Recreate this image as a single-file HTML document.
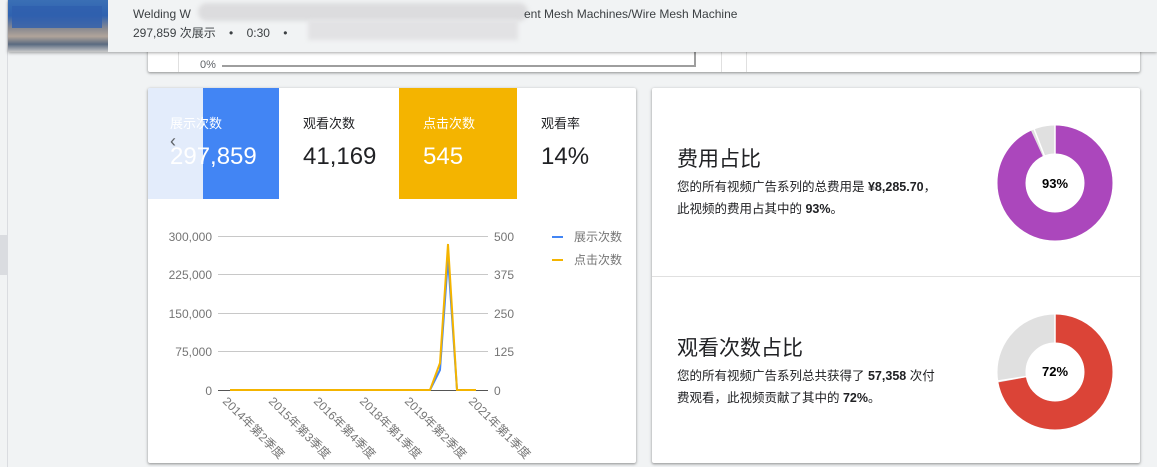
<!DOCTYPE html>
<html><head><meta charset="utf-8"><style>
*{margin:0;padding:0;box-sizing:border-box}
body{width:1157px;height:467px;overflow:hidden;background:#f1f3f4;font-family:"Liberation Sans","Noto Sans CJK SC",sans-serif;position:relative;color:#202124}
.abs{position:absolute}
.card{position:absolute;background:#fff;box-shadow:0 1px 2px rgba(0,0,0,.3),0 1px 3px 1px rgba(0,0,0,.1);border-radius:2px}
</style></head><body>
<div class="abs" style="left:7px;top:0;width:1px;height:467px;background:#dadce0"></div>
<div class="abs" style="left:0;top:235px;width:7px;height:40px;background:#dadce0"></div>

<div class="card" style="left:148px;top:40px;width:992px;height:32px;overflow:hidden">
  <div class="abs" style="left:30px;top:0;width:1px;height:32px;background:#e0e0e0"></div>
  <div class="abs" style="left:52px;top:19px;font-size:11px;color:#5f6368">0%</div>
  <div class="abs" style="left:74px;top:25px;width:473px;height:2px;background:#9e9e9e"></div>
  <div class="abs" style="left:546px;top:0;width:2px;height:27px;background:#9e9e9e"></div>
  <div class="abs" style="left:573px;top:0;width:1px;height:32px;background:#e0e0e0"></div>
  <div class="abs" style="left:598px;top:0;width:1px;height:32px;background:#e0e0e0"></div>
</div>

<div class="abs" style="left:8px;top:0;width:1149px;height:52px;background:#f1f3f4;box-shadow:0 1px 3px rgba(0,0,0,.35)">
  <div class="abs" style="left:0;top:0;width:100px;height:52px;background:linear-gradient(180deg,#3a6fb5 0%,#2f62b0 30%,#8a8a90 55%,#b0a49a 70%,#5a6a80 85%,#c9c9c9 100%)"></div>
  <div class="abs" style="left:4px;top:6px;width:90px;height:22px;background:#2f5fae;opacity:.8"></div>
  <div class="abs" style="left:125px;top:7px;font-size:12px;color:#3c4043">Welding W</div>
  <div class="abs" style="left:190px;top:3px;width:330px;height:18px;background:#dcdcde;border-radius:9px;filter:blur(2px)"></div>
  <div class="abs" style="left:300px;top:20px;width:210px;height:20px;background:#e2e2e4;filter:blur(2px)"></div>
  <div class="abs" style="left:516px;top:7px;font-size:12px;color:#3c4043">ent Mesh Machines/Wire Mesh Machine</div>
  <div class="abs" style="left:125px;top:24px;font-size:12px;color:#3c4043">297,859 次展示&nbsp;&nbsp;&nbsp;&nbsp;•&nbsp;&nbsp;&nbsp;&nbsp;0:30&nbsp;&nbsp;&nbsp;&nbsp;•</div>
</div>

<div class="card" style="left:148px;top:88px;width:488px;height:375px;overflow:hidden">
  <div class="abs" style="left:0;top:0;width:55px;height:111px;background:#e3ecfb"></div>
  <div class="abs" style="left:55px;top:0;width:76px;height:111px;background:#4285f4"></div>
  <div class="abs" style="left:251px;top:0;width:118px;height:111px;background:#f4b400"></div>
  <div class="abs" style="left:22px;top:25px;font-size:13px;color:#fff">展示次数</div>
  <div class="abs" style="left:22px;top:55px;font-size:24px;color:#fff">297,859</div>
  <div class="abs" style="left:22px;top:43px;font-size:18px;color:#5f6368">‹</div>
  <div class="abs" style="left:155px;top:25px;font-size:13px">观看次数</div>
  <div class="abs" style="left:155px;top:55px;font-size:24px">41,169</div>
  <div class="abs" style="left:275px;top:25px;font-size:13px;color:#fff">点击次数</div>
  <div class="abs" style="left:275px;top:55px;font-size:24px;color:#fff">545</div>
  <div class="abs" style="left:393px;top:25px;font-size:13px">观看率</div>
  <div class="abs" style="left:393px;top:55px;font-size:24px">14%</div>
</div>
<svg class="abs" style="left:0;top:0" width="1157" height="467">
  <g stroke="#c8c8c8" stroke-width="1">
    <line x1="218" y1="236.5" x2="488" y2="236.5"/><line x1="218" y1="274.5" x2="488" y2="274.5"/>
    <line x1="218" y1="313.5" x2="488" y2="313.5"/><line x1="218" y1="351.5" x2="488" y2="351.5"/>
  </g>
  <line x1="218" y1="390.5" x2="488" y2="390.5" stroke="#555"/>
  <g font-size="12" fill="#757575" font-family="Liberation Sans,sans-serif" text-anchor="end">
    <text x="212" y="241">300,000</text><text x="212" y="279">225,000</text><text x="212" y="318">150,000</text><text x="212" y="356">75,000</text><text x="212" y="395">0</text>
  </g>
  <g font-size="12" fill="#757575" font-family="Liberation Sans,sans-serif">
    <text x="494" y="241">500</text><text x="494" y="279">375</text><text x="494" y="318">250</text><text x="494" y="356">125</text><text x="494" y="395">0</text>
  </g>
  <polyline points="230,390 430,390 440,370 448,258 457,390 476,390" fill="none" stroke="#4285f4" stroke-width="2"/>
  <polyline points="230,390 430,390 440,363 448,244 457,390 476,390" fill="none" stroke="#f4b400" stroke-width="2"/>
  <line x1="552" y1="237" x2="563" y2="237" stroke="#4285f4" stroke-width="2"/>
  <line x1="552" y1="260" x2="563" y2="260" stroke="#f4b400" stroke-width="2"/>
  <g font-size="12" fill="#757575" font-family="Liberation Sans,Noto Sans CJK SC,sans-serif">
    <text x="574" y="241">展示次数</text><text x="574" y="264">点击次数</text>
    <text transform="translate(222,402) rotate(45)">2014年第2季度</text>
    <text transform="translate(268,402) rotate(45)">2015年第3季度</text>
    <text transform="translate(313,402) rotate(45)">2016年第4季度</text>
    <text transform="translate(359,402) rotate(45)">2018年第1季度</text>
    <text transform="translate(404,402) rotate(45)">2019年第2季度</text>
    <text transform="translate(468,402) rotate(45)">2021年第1季度</text>
  </g>
</svg>

<div class="card" style="left:652px;top:88px;width:488px;height:375px">
  <div class="abs" style="left:0;top:188px;width:488px;height:1px;background:#e0e0e0"></div>
  <div class="abs" style="left:25px;top:55px;font-size:21px">费用占比</div>
  <div class="abs" style="left:25px;top:88px;font-size:12.5px;line-height:22px">您的所有视频广告系列的总费用是 <b>¥8,285.70</b>，<br>此视频的费用占其中的 <b>93%</b>。</div>
  <div class="abs" style="left:25px;top:244px;font-size:21px">观看次数占比</div>
  <div class="abs" style="left:25px;top:277px;font-size:12.5px;line-height:22px">您的所有视频广告系列总共获得了 <b>57,358</b> 次付<br>费观看，此视频贡献了其中的 <b>72%</b>。</div>
</div>
<svg class="abs" style="left:0;top:0" width="1157" height="467">
  <circle cx="1055" cy="183" r="43.5" fill="none" stroke="#e0e0e0" stroke-width="28"/>
  <circle cx="1055" cy="183" r="43.5" fill="none" stroke="#ab47bc" stroke-width="28" stroke-dasharray="254.2 300" transform="rotate(-90 1055 183)"/>
  <line x1="1055" y1="183" x2="1055" y2="125" stroke="#fff" stroke-width="1.5"/>
  <line x1="1055" y1="183" x2="1034" y2="129" stroke="#fff" stroke-width="1.5"/>
  <text x="1055" y="188" font-size="13" font-weight="bold" text-anchor="middle" font-family="Liberation Sans,sans-serif">93%</text>
  <circle cx="1055" cy="372" r="43.5" fill="none" stroke="#e0e0e0" stroke-width="28"/>
  <circle cx="1055" cy="372" r="43.5" fill="none" stroke="#db4437" stroke-width="28" stroke-dasharray="196.8 300" transform="rotate(-90 1055 372)"/>
  <line x1="1055" y1="372" x2="1055" y2="314" stroke="#fff" stroke-width="1.5"/>
  <line x1="1055" y1="372" x2="998" y2="381" stroke="#fff" stroke-width="1.5"/>
  <text x="1055" y="376" font-size="13" font-weight="bold" text-anchor="middle" font-family="Liberation Sans,sans-serif">72%</text>
</svg>
</body></html>
